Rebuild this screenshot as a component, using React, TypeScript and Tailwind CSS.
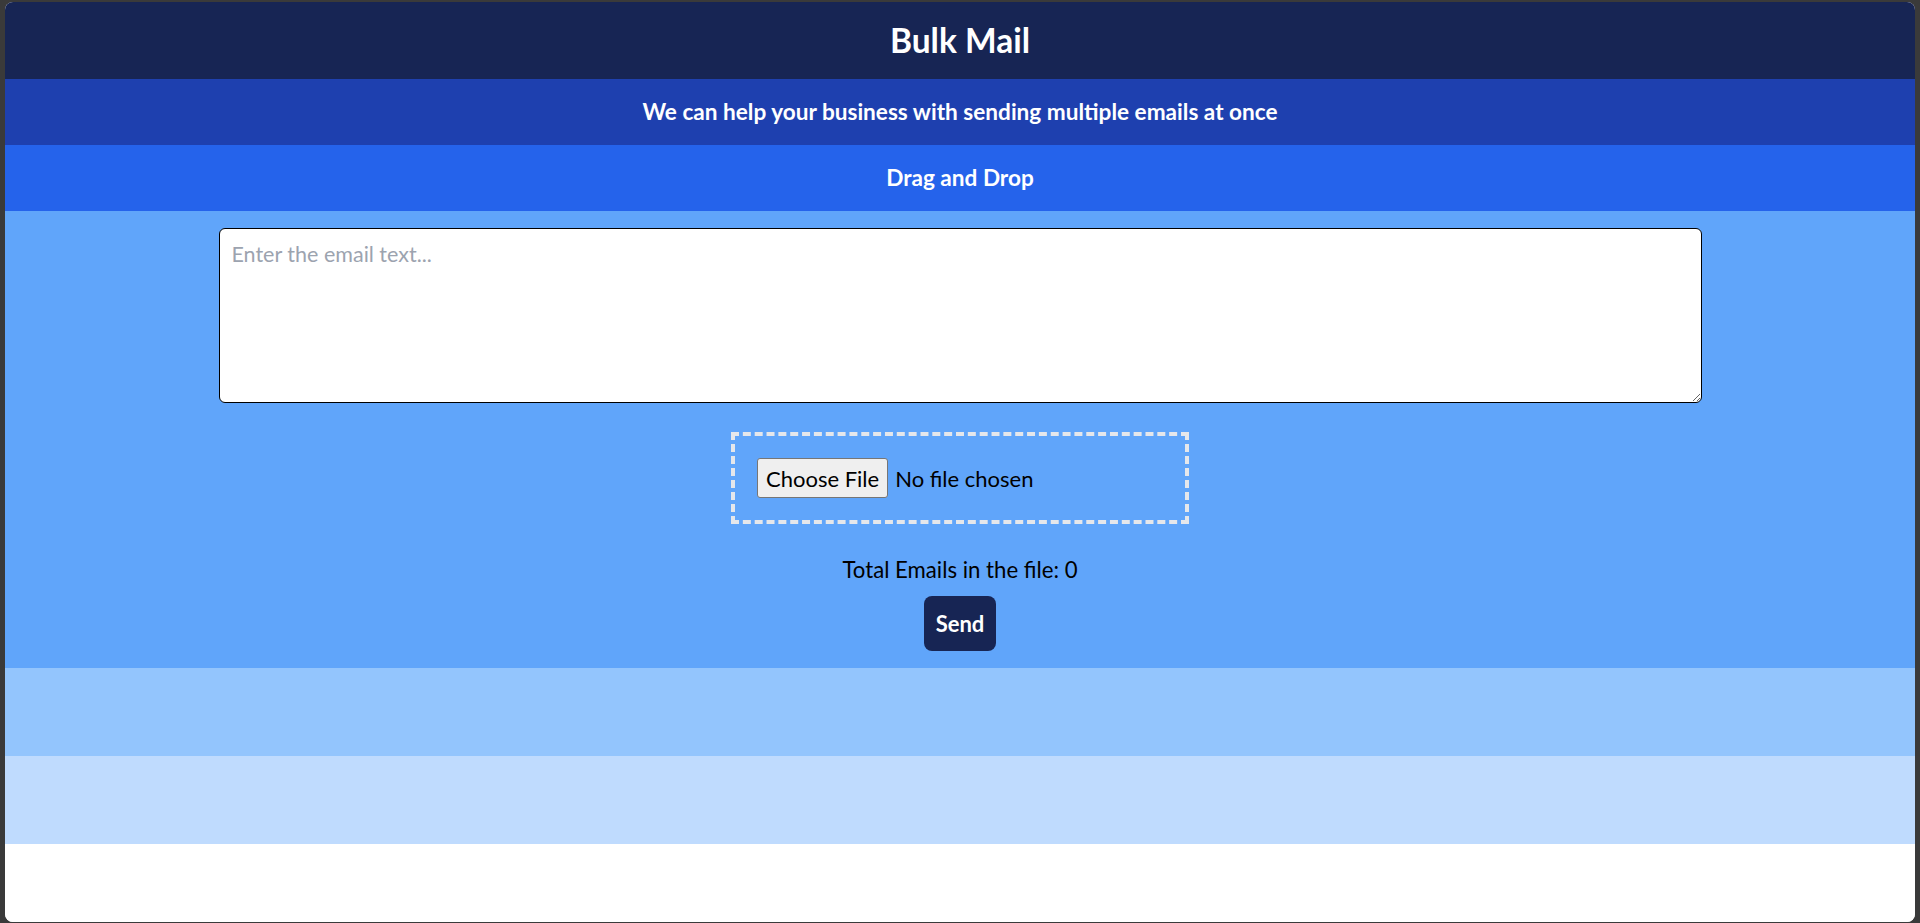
import React from "react";

export default function App() {
  return (
    <div className="w-full h-[923px] bg-[#3a3a3a] pt-[2px] px-[5px] pb-[1px] font-['Lato','Noto_Sans',sans-serif]">
      <div className="h-full w-full rounded-[8px] overflow-hidden bg-white flex flex-col">
        <header className="h-[77px] shrink-0 bg-[#172554] flex items-center justify-center">
          <h1 className="text-white text-[33.5px] font-bold leading-none">Bulk Mail</h1>
        </header>
        <div className="h-[66px] shrink-0 bg-[#1e40af] flex items-center justify-center">
          <p className="text-white text-[22.6px] font-bold">We can help your business with sending multiple emails at once</p>
        </div>
        <div className="h-[66px] shrink-0 bg-[#2563eb] flex items-center justify-center">
          <p className="text-white text-[22.6px] font-bold">Drag and Drop</p>
        </div>
        <main className="h-[457px] shrink-0 bg-[#60a5fa] flex flex-col items-center pt-[17px]">
          <textarea
            className="w-[1483px] h-[175px] bg-white border border-black rounded-[6px] px-[12px] py-[9px] text-[21.5px] text-black placeholder:text-[#9ca3af] outline-none"
            placeholder="Enter the email text..."
          />
          <div className="mt-[29px] w-[458px] h-[92px] border-4 border-dashed border-[#e5e7eb] flex items-center px-[22px]">
            <input
              type="file"
              className="text-[22px] text-black file:mr-[7px] file:h-[40px] file:px-[8px] file:border file:border-solid file:border-[#767676] file:rounded-[3px] file:bg-[#efefef] file:text-[22px] file:text-black file:font-['Lato',sans-serif]"
            />
          </div>
          <p className="mt-[32px] text-[22.2px] text-black leading-[28px]">Total Emails in the file: 0</p>
          <button className="mt-[12px] w-[72px] h-[55px] bg-[#172554] text-white text-[22px] font-bold rounded-[8px]">
            Send
          </button>
        </main>
        <div className="h-[88px] shrink-0 bg-[#93c5fd]" />
        <div className="h-[88px] shrink-0 bg-[#bfdbfe]" />
        <div className="flex-1 bg-white" />
      </div>
    </div>
  );
}
